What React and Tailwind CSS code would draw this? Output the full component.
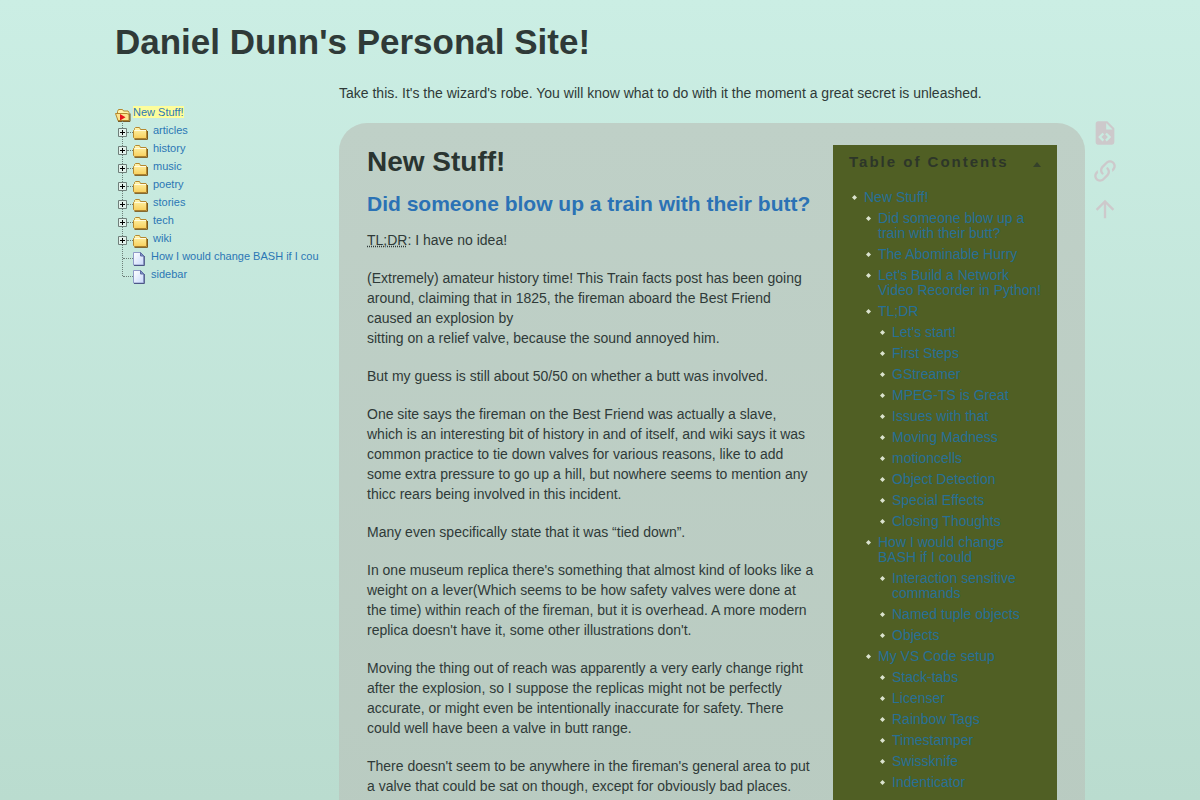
const folders = ["articles", "history", "music", "poetry", "stories", "tech", "wiki"];
const pages = ["How I would change BASH if I cou", "sidebar"];

const toc = [
  {
    title: "New Stuff!",
    children: [
      { title: "Did someone blow up a train with their butt?" },
      { title: "The Abominable Hurry" },
      { title: "Let's Build a Network Video Recorder in Python!" },
      {
        title: "TL;DR",
        children: [
          { title: "Let's start!" },
          { title: "First Steps" },
          { title: "GStreamer" },
          { title: "MPEG-TS is Great" },
          { title: "Issues with that" },
          { title: "Moving Madness" },
          { title: "motioncells" },
          { title: "Object Detection" },
          { title: "Special Effects" },
          { title: "Closing Thoughts" },
        ],
      },
      {
        title: "How I would change BASH if I could",
        children: [
          { title: "Interaction sensitive commands" },
          { title: "Named tuple objects" },
          { title: "Objects" },
        ],
      },
      {
        title: "My VS Code setup",
        children: [
          { title: "Stack-tabs" },
          { title: "Licenser" },
          { title: "Rainbow Tags" },
          { title: "Timestamper" },
          { title: "Swissknife" },
          { title: "Indenticator" },
        ],
      },
    ],
  },
];

const paragraphs = [
  "But my guess is still about 50/50 on whether a butt was involved.",
  "One site says the fireman on the Best Friend was actually a slave, which is an interesting bit of history in and of itself, and wiki says it was common practice to tie down valves for various reasons, like to add some extra pressure to go up a hill, but nowhere seems to mention any thicc rears being involved in this incident.",
  "Many even specifically state that it was “tied down”.",
  "In one museum replica there's something that almost kind of looks like a weight on a lever(Which seems to be how safety valves were done at the time) within reach of the fireman, but it is overhead. A more modern replica doesn't have it, some other illustrations don't.",
  "Moving the thing out of reach was apparently a very early change right after the explosion, so I suppose the replicas might not be perfectly accurate, or might even be intentionally inaccurate for safety. There could well have been a valve in butt range.",
  "There doesn't seem to be anywhere in the fireman's general area to put a valve that could be sat on though, except for obviously bad places.",
];

const pageActions = [
  {
    label: "View source",
    href: "#source",
    path: "M13,9H18.5L13,3.5V9M6,2H14L20,8V20A2,2 0 0,1 18,22H6C4.89,22 4,21.1 4,20V4C4,2.89 4.89,2 6,2M6.12,15.5L9.86,19.24L11.28,17.83L8.95,15.5L11.28,13.17L9.86,11.76L6.12,15.5M17.28,15.5L13.54,11.76L12.12,13.17L14.45,15.5L12.12,17.83L13.54,19.24L17.28,15.5Z",
  },
  {
    label: "Permalink",
    href: "#link",
    path: "M10.59,13.41C11,13.8 11,14.44 10.59,14.83C10.2,15.22 9.56,15.22 9.17,14.83C7.22,12.88 7.22,9.71 9.17,7.76V7.76L12.71,4.22C14.66,2.27 17.83,2.27 19.78,4.22C21.73,6.17 21.73,9.34 19.78,11.29L18.29,12.78C18.3,11.96 18.17,11.14 17.89,10.36L18.36,9.88C19.54,8.71 19.54,6.81 18.36,5.64C17.19,4.46 15.29,4.46 14.12,5.64L10.59,9.17C9.41,10.34 9.41,12.24 10.59,13.41M13.41,9.17C13.8,8.78 14.44,8.78 14.83,9.17C16.78,11.12 16.78,14.29 14.83,16.24V16.24L11.29,19.78C9.34,21.73 6.17,21.73 4.22,19.78C2.27,17.83 2.27,14.66 4.22,12.71L5.71,11.22C5.7,12.04 5.83,12.86 6.11,13.65L5.64,14.12C4.46,15.29 4.46,17.19 5.64,18.36C6.81,19.54 8.71,19.54 9.88,18.36L13.41,14.83C14.59,13.66 14.59,11.76 13.41,10.59C13,10.2 13,9.56 13.41,9.17Z",
  },
  {
    label: "Back to top",
    href: "#top",
    path: "M13,20H11V8L5.5,13.5L4.08,12.08L12,4.16L19.92,12.08L18.5,13.5L13,8V20Z",
  },
];

const FolderIcon = () => (
  <svg width="16" height="14" viewBox="0 0 16 14" aria-hidden="true">
    <defs>
      <linearGradient id="folder" x1="0" y1="0" x2="0" y2="1">
        <stop offset="0" stopColor="#fff6b0" />
        <stop offset="1" stopColor="#f8cf5c" />
      </linearGradient>
    </defs>
    <path
      d="M.5 4.500 1.500 3.500V2.500L2.500 1.500h4l1 2h5.500l.500.500v8.500H1.500l-1-1z"
      fill="url(#folder)"
      stroke="#b5882f"
    />
    <path d="M1.500 4.500h11.500" stroke="#fffbe0" />
    <path d="M1.500 13.400h13V5" fill="none" stroke="#7c5a1c" />
  </svg>
);

const OpenFolderIcon = () => (
  <svg width="16" height="14" viewBox="0 0 16 14" aria-hidden="true">
    <path d="M2.500 12V3.500L3.500 1.500h4l1 1.500h4.500l1 1.500V12z" fill="#fff3a8" stroke="#b5882f" />
    <path d="M.5 5.500h11.500l2 1v6H3z" fill="#fbe48f" stroke="#b5882f" />
    <path d="M3 13.400h12V5.500" fill="none" stroke="#6b4c16" />
    <path d="M5 6l5.500 3.200L5 12.400z" fill="#e8141c" />
  </svg>
);

const PageIcon = () => (
  <svg width="12" height="14" viewBox="0 0 12 14" aria-hidden="true">
    <defs>
      <linearGradient id="page" x1="0" y1="0" x2="1" y2="1">
        <stop offset="0" stopColor="#ffffff" />
        <stop offset="1" stopColor="#c9d9fa" />
      </linearGradient>
    </defs>
    <path d="M.5.5h7l3 3.500v9H.5z" fill="url(#page)" stroke="#8f9bc8" />
    <path d="M11.400 4v9.500H1" fill="none" stroke="#4d5787" />
    <path d="M7.500.5V4H11z" fill="#7f92cc" stroke="#5f6da3" />
  </svg>
);

const ExpandIcon = () => (
  <svg width="9" height="9" viewBox="0 0 9 9" aria-hidden="true">
    <path d="M.5.5h8v8h-8z" fill="#e2f1eb" stroke="#6f7f7a" />
    <path d="M2 4.500h5M4.500 2v5" stroke="#000" />
  </svg>
);

const BulletIcon = () => (
  <svg className="h-[15px] w-[5px] shrink-0" viewBox="0 0 5 15" aria-hidden="true">
    <path d="M2.500 5 5 7.500l-2.500 2.500L0 7.500z" fill="#dbe3ce" />
  </svg>
);

const SiteTree = () => (
  <nav className="w-52 shrink-0 pt-5 text-[11px] leading-[18px] text-[#2b77b5]">
    <a href="#new" className="flex h-[18px] items-center gap-0.5">
      <span className="pt-1.5">
        <OpenFolderIcon />
      </span>
      <span className="bg-[#fdfd9b] leading-3">New Stuff!</span>
    </a>
    <ul className="relative">
      <li
        className="absolute top-0 bottom-[7px] left-[7px] border-l border-dotted border-[#6d7f79]"
        aria-hidden="true"
      ></li>
      {folders.map((name) => (
        <li key={name} className="relative flex h-[18px] items-center pl-[3px]">
          <button type="button" className="pt-1" aria-label={`Expand ${name}`}>
            <ExpandIcon />
          </button>
          <span className="mt-1 w-1.5 border-t border-dotted border-[#6d7f79]"></span>
          <a href={`#${name}`} className="flex items-center gap-1">
            <span className="pt-1.5">
              <FolderIcon />
            </span>
            {name}
          </a>
        </li>
      ))}
      {pages.map((name) => (
        <li key={name} className="flex h-[18px] items-center pl-2">
          <span className="mt-1 w-[10px] shrink-0 border-t border-dotted border-[#6d7f79]"></span>
          <a href="#page" className="flex items-center gap-1.5 whitespace-nowrap">
            <span className="shrink-0 pt-1.5">
              <PageIcon />
            </span>
            {name}
          </a>
        </li>
      ))}
    </ul>
  </nav>
);

const TocList = ({ items, nested = false }) => (
  <ul className={nested ? "mt-1.5 flex flex-col gap-1.5 pl-3.5" : "flex flex-col gap-1.5"}>
    {items.map((item) => (
      <li key={item.title}>
        <div className="flex gap-[7px]">
          <BulletIcon />
          <a href="#section" className="text-[#277096]">
            {item.title}
          </a>
        </div>
        {item.children && <TocList items={item.children} nested />}
      </li>
    ))}
  </ul>
);

const TableOfContents = () => (
  <aside className="w-56 shrink-0 bg-[#505f24] px-4 pt-2 text-sm leading-[15px]">
    <div className="flex items-center justify-between">
      <h2 className="text-[15px] leading-[18px] font-bold tracking-[2px] whitespace-nowrap text-[#2d3629]">
        Table of Contents
      </h2>
      <button type="button" className="pt-1" aria-label="Collapse contents">
        <svg width="8" height="5" viewBox="0 0 8 5" aria-hidden="true">
          <path d="M4 0l4 5H0z" fill="#35412a" />
        </svg>
      </button>
    </div>
    <div className="-mr-0.5 pt-[19px] pl-[3px]">
      <TocList items={toc} />
    </div>
  </aside>
);

const App = () => {
  return (
    <div className="h-screen overflow-hidden bg-linear-to-b from-[#cbeee4] to-[#badccf] font-['Liberation_Sans',sans-serif] text-sm text-[#2f3a38]">
      <div className="mr-[115px] ml-[115px]">
        <header className="pt-5">
          <h1 className="text-[35px] leading-[44px] font-bold">Daniel Dunn's Personal Site!</h1>
        </header>
        <div className="flex gap-4 pt-[19px]">
          <SiteTree />
          <div className="min-w-0 flex-1">
            <p className="leading-5">
              Take this. It's the wizard's robe. You will know what to do with it the moment a great
              secret is unleashed.
            </p>
            <div className="relative pt-5">
              <main className="flex gap-4.5 rounded-t-[28px] bg-linear-to-b from-[#bfd0c7] to-[#b9cbc1] px-7 pt-[22px]">
                <article className="min-w-0 flex-1 pb-10">
                  <h1 className="text-[28px] leading-[34px] font-bold text-[#2a3531]">
                    New Stuff!
                  </h1>
                  <h2 className="pt-[13px] text-[21px] leading-6 font-bold whitespace-nowrap text-[#2b72b5]">
                    <a href="#train">Did someone blow up a train with their butt?</a>
                  </h2>
                  <div className="flex flex-col gap-4.5 pt-3.5 leading-5">
                    <p>
                      <abbr title="Too long; didn't read" className="underline decoration-dotted">
                        TL;DR
                      </abbr>
                      : I have no idea!
                    </p>
                    <p>
                      (Extremely) amateur history time! This Train facts post has been going around,
                      claiming that in 1825, the fireman aboard the Best Friend caused an explosion
                      by
                      <br />
                      sitting on a relief valve, because the sound annoyed him.
                    </p>
                    {paragraphs.map((text) => (
                      <p key={text}>{text}</p>
                    ))}
                  </div>
                </article>
                <TableOfContents />
              </main>
              <div className="absolute top-4 left-full flex flex-col gap-2.5 pl-1.5 text-[#cdc9cb]">
                {pageActions.map((action) => (
                  <a key={action.label} href={action.href} aria-label={action.label}>
                    <svg className="block size-7" viewBox="0 0 24 24" fill="currentColor">
                      <path d={action.path} />
                    </svg>
                  </a>
                ))}
              </div>
            </div>
          </div>
        </div>
      </div>
    </div>
  );
};

export default App;
